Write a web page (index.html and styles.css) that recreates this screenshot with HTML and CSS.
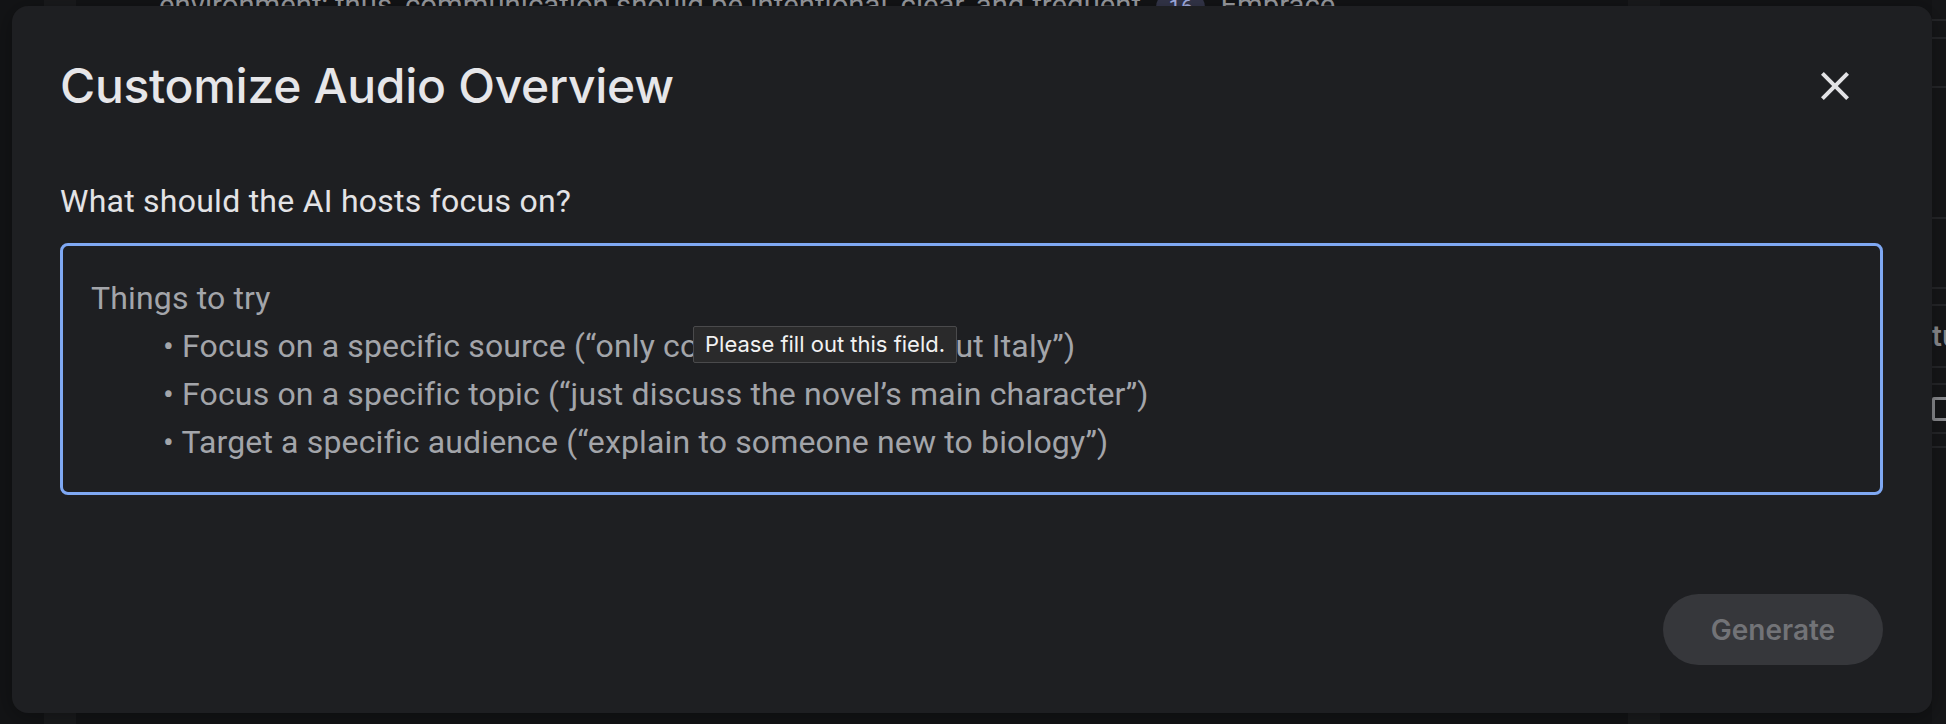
FILE: index.html
```html
<!DOCTYPE html>
<html lang="en">
<head>
<meta charset="utf-8">
<title>Customize Audio Overview</title>
<link rel="stylesheet" href="styles.css">
</head>
<body>
  <div class="page">
    <div class="gutter"></div>
    <div class="strip"></div>
    <main class="doc">
      <p class="doc-line">environment; thus, communication should be intentional, clear, and frequent <span class="cite">16</span> Embrace</p>
    </main>
    <div class="strip"></div>
    <div class="spacer"></div>
    <aside class="side">
      <div class="side-row h21"></div>
      <div class="side-row h18"></div>
      <div class="side-row h49"></div>
      <div class="side-row h131"></div>
      <div class="side-row h70"></div>
      <div class="side-row h17"></div>
      <div class="side-row h62 center"><span class="side-text">tu</span></div>
      <div class="side-row h17"></div>
      <div class="side-row h49 center"><span class="side-icon"></span></div>
      <div class="side-row h14"></div>
    </aside>
  </div>

  <div class="dialog" role="dialog" aria-label="Customize Audio Overview">
    <header class="dialog-header">
      <h1 class="dialog-title">Customize Audio Overview</h1>
      <button class="close-btn" aria-label="Close">
        <svg viewBox="0 0 24 24" width="48" height="48"><path fill="currentColor" d="M19 6.41L17.59 5 12 10.59 6.41 5 5 6.41 10.59 12 5 17.59 6.41 19 12 13.41 17.59 19 19 17.59 13.41 12z"/></svg>
      </button>
    </header>
    <label class="field-label">What should the AI hosts focus on?</label>
    <div class="field">
      <div class="placeholder">
        <div class="ph-line">Things to try</div>
        <div class="ph-line ph-bullet">• Focus on a specific source (“only cover the article about Italy”)</div>
        <div class="ph-line ph-bullet">• Focus on a specific topic (“just discuss the novel’s main character”)</div>
        <div class="ph-line ph-bullet">• Target a specific audience (“explain to someone new to biology”)</div>
      </div>
      <div class="tooltip">Please fill out this field.</div>
    </div>
    <footer class="dialog-footer">
      <button class="generate-btn" disabled>Generate</button>
    </footer>
  </div>
</body>
</html>
```

FILE: styles.css
```css
html, body {
  margin: 0;
  padding: 0;
}
body {
  width: 1946px;
  height: 724px;
  overflow: hidden;
  background: #131416;
  position: relative;
  font-family: "Roboto", "Liberation Sans", sans-serif;
}

/* background page */
.page {
  display: flex;
  height: 724px;
  overflow: hidden;
}
.gutter {
  width: 44px;
  flex: none;
  background: #131416;
}
.strip {
  width: 32px;
  flex: none;
  background: #1a1b1d;
}
.doc {
  width: 1552px;
  flex: none;
  padding-left: 83px;
  box-sizing: border-box;
  overflow: hidden;
}
.doc-line {
  margin: -15px 0 0;
  font-size: 29.3px;
  line-height: 40px;
  color: #9c9ea3;
  white-space: nowrap;
}
.cite {
  display: inline-block;
  background: #34364a;
  color: #a8b4e8;
  border-radius: 14px;
  padding: 0 12px;
  font-size: 22px;
  line-height: 30px;
  margin: 0 8px;
}
.spacer {
  width: 272px;
  flex: none;
}
.side {
  flex: none;
  width: 14px;
  background: #161719;
  display: flex;
  flex-direction: column;
  overflow: hidden;
}
.side-row {
  flex: none;
  width: 200px;
  border-bottom: 2px solid #26272a;
  box-sizing: border-box;
}
.center { display: flex; align-items: center; }
.h21 { height: 21px; }
.h18 { height: 18px; }
.h49 { height: 49px; }
.h131 { height: 131px; }
.h70 { height: 70px; }
.h17 { height: 17px; }
.h62 { height: 62px; }
.h14 { height: 14px; }
.side-text {
  font-family: "Inter", sans-serif;
  font-weight: 600;
  font-size: 28px;
  color: #8d8e92;
}
.side-icon {
  width: 20px;
  height: 18px;
  border: 3px solid #8d8e92;
  border-radius: 2px;
}

/* dialog (modal overlay) */
.dialog {
  position: absolute;
  left: 12px;
  top: 6px;
  width: 1920px;
  height: 707px;
  box-sizing: border-box;
  padding: 48px 49px 48px 48px;
  background: #1e1f22;
  border-radius: 16px;
  display: flex;
  flex-direction: column;
  box-shadow: 0 4px 24px rgba(0,0,0,0.35);
}
.dialog-header {
  height: 64px;
  display: flex;
  align-items: center;
  justify-content: space-between;
}
.dialog-title {
  margin: 0;
  font-family: "Inter", "Open Sans", sans-serif;
  font-weight: 500;
  font-size: 48px;
  line-height: 64px;
  letter-spacing: -0.3px;
  color: #e6e6e9;
}
.close-btn {
  background: none;
  border: 0;
  padding: 0;
  margin-right: 24px;
  width: 48px;
  height: 48px;
  color: #e3e3e6;
  display: flex;
}
.field-label {
  margin-top: 59px;
  font-size: 32px;
  letter-spacing: 0.25px;
  line-height: 48px;
  color: #e3e3e6;
}
.field {
  position: relative;
  margin-top: 18px;
  height: 252px;
  box-sizing: border-box;
  border: 3px solid #7fa8f3;
  border-radius: 8px;
  padding: 28px 28px 0;
}
.placeholder {
  font-size: 32px;
  letter-spacing: 0.15px;
  line-height: 48px;
  color: #a3a5aa;
}
.ph-bullet {
  padding-left: 72px;
}
.tooltip {
  position: absolute;
  left: 630px;
  top: 80px;
  height: 37px;
  box-sizing: border-box;
  padding: 0 11px;
  background: #2a2a2b;
  border: 1px solid #4a4a4c;
  border-radius: 2px;
  font-family: "Inter", "Liberation Sans", sans-serif;
  font-size: 22px;
  line-height: 35px;
  color: #f2f2f2;
  white-space: nowrap;
}
.dialog-footer {
  margin-top: 99px;
  display: flex;
  justify-content: flex-end;
}
.generate-btn {
  width: 220px;
  height: 71px;
  border: 0;
  border-radius: 36px;
  background: #36373b;
  color: #727377;
  font-family: "Inter", sans-serif;
  font-weight: 600;
  font-size: 28px;
}
```
